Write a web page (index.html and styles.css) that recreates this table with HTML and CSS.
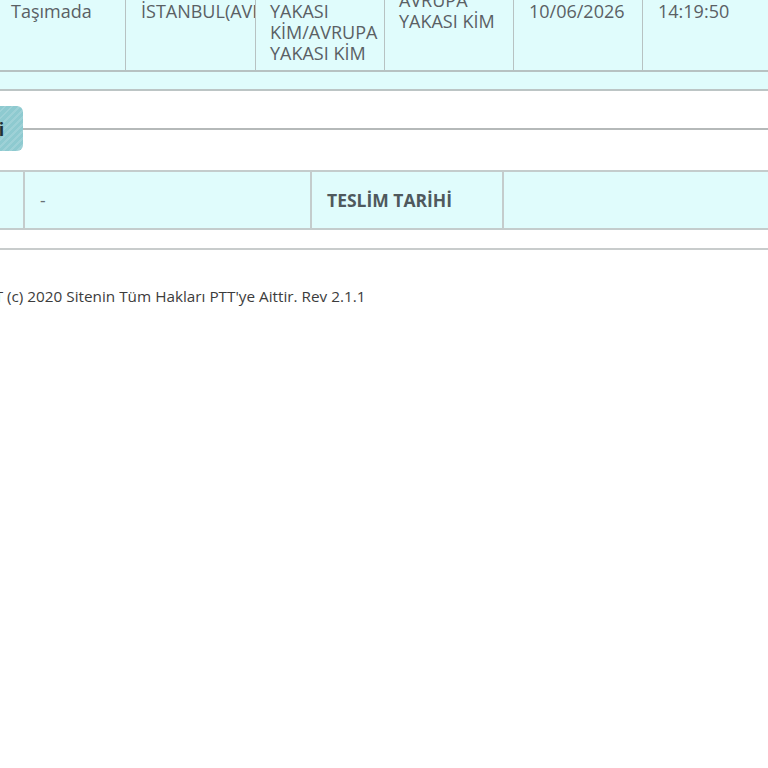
FILE: index.html
```html
<!DOCTYPE html>
<html lang="tr">
<head>
<meta charset="utf-8">
<title>PTT Gönderi Takip</title>
<link rel="stylesheet" href="styles.css">
</head>
<body>
<div class="page">
  <table class="t1">
    <tr>
      <td class="c1"><div class="cell">Taşımada</div></td>
      <td class="c2"><div class="cell clip">İSTANBUL(AVRUPA)</div></td>
      <td class="c3"><div class="cell">YAKASI<br>KİM/AVRUPA<br>YAKASI KİM</div></td>
      <td class="c4"><div class="cell up">AVRUPA<br>YAKASI KİM</div></td>
      <td class="c5"><div class="cell">10/06/2026</div></td>
      <td class="c6"><div class="cell">14:19:50</div></td>
    </tr>
  </table>
  <div class="strip"></div>

  <div class="lower">
    <div class="tabbar">
      <div class="tab">Detay Bilgi</div>
      <div class="tabline"></div>
    </div>

    <table class="t2">
      <tr>
        <td class="d1"></td>
        <td class="d2">-</td>
        <td class="d3">TESLİM TARİHİ</td>
        <td class="d4"></td>
      </tr>
    </table>
    <div class="rule"></div>

    <p class="footer">PTT (c) 2020 Sitenin Tüm Hakları PTT'ye Aittir. Rev 2.1.1</p>
  </div>
</div>
</body>
</html>
```
FILE: styles.css
```css
html, body {
  margin: 0;
  padding: 0;
  background: #ffffff;
  overflow: hidden;
}
body {
  font-family: "Open Sans", "Liberation Sans", sans-serif;
  color: #5a6064;
}
.page {
  width: 768px;
}
.t1 {
  border-collapse: collapse;
  width: 770px;
  margin-left: -1px;
  table-layout: fixed;
  background: #e0fcfc;
}
.t1 td {
  border-right: 1.5px solid #b7c2c2;
  border-left: 1.5px solid #b7c2c2;
  border-bottom: 2px solid #b7c2c2;
  height: 71px;
  padding: 0 0 0 11px;
  vertical-align: top;
  font-size: 18px;
  line-height: 21px;
  box-sizing: border-box;
}
.t1 .c1 { width: 126px; }
.t1 .c2 { width: 130px; padding-left: 15px; }
.t1 .c3 { width: 129px; padding-left: 14px; }
.t1 .c4 { width: 129px; padding-left: 14px; }
.t1 .c5 { width: 129px; padding-left: 15px; }
.t1 .c6 { width: 127px; padding-left: 15px; }
.cell {
  margin-top: 1px;
}
.cell.clip {
  white-space: nowrap;
  overflow: hidden;
}
.cell.up {
  margin-top: -10px;
}
.strip {
  height: 17px;
  background: #e0fcfc;
  border-bottom: 2px solid #bcc5c5;
}
.lower {
  margin-left: -90px;
  width: 858px;
}
.tabbar {
  display: flex;
  align-items: center;
  margin-top: 15px;
  height: 45px;
}
.tab {
  height: 45px;
  box-sizing: border-box;
  padding: 0 19px 0 10px;
  margin-left: -12px;
  display: flex;
  align-items: center;
  border-radius: 6px;
  font-size: 18px;
  font-weight: 700;
  color: #1f3136;
  white-space: nowrap;
  background-color: #8ecad0;
  background-image: repeating-linear-gradient(135deg, rgba(255,255,255,0.14) 0 2px, rgba(255,255,255,0) 2px 5px);
}
.tabline {
  flex: 1;
  height: 2px;
  background: #b5b9b9;
}
.t2 {
  margin-top: 19px;
  border-collapse: collapse;
  table-layout: fixed;
  width: 860px;
  background: #e0fcfc;
}
.t2 td {
  border-top: 2px solid #c4cccc;
  border-bottom: 2px solid #c4cccc;
  border-left: 2px solid #c4cccc;
  height: 58px;
  box-sizing: border-box;
  padding: 0 0 0 16px;
  font-size: 17.5px;
  vertical-align: middle;
}
.t2 .d1 { width: 113px; }
.t2 .d2 { width: 287px; color: #687075; }
.t2 .d3 { width: 192px; font-weight: 700; color: #4f595d; padding-left: 15px; }
.t2 .d4 { width: 268px; }
.t2 td.d2 { padding-left: 15px; }
.rule {
  margin-top: 18px;
  height: 2px;
  background: #c8cccc;
}
.footer {
  margin: 36px 0 0 67px;
  font-size: 15.3px;
  color: #3c3c3c;
  line-height: 20px;
}
```
